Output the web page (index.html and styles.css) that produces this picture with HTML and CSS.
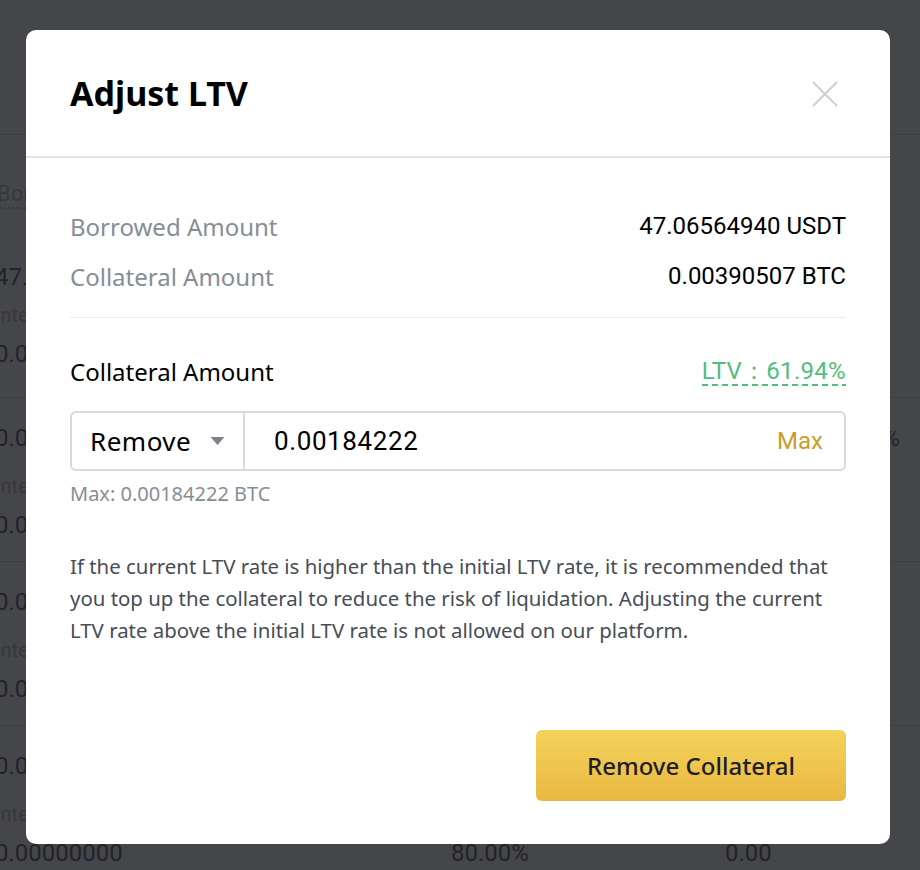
FILE: index.html
```html
<!DOCTYPE html>
<html lang="en">
<head>
  <meta charset="UTF-8" />
  <meta name="viewport" content="width=device-width, initial-scale=1" />
  <title>Adjust LTV</title>
  <link rel="stylesheet" href="styles.css">
</head>
<body>

  <!-- =================
       PÁGINA DE PRÉSTAMOS (DETRÁS DEL MODAL, YA OSCURECIDA)
       ================= -->
  <div class="page">
    <div class="page-top"></div>
    <div class="tabs"><span class="tab">Borrowed Orders</span></div>

    <div class="loan-row first">
      <div class="loan-line"><span>47.06564940</span><span>0.00390507</span><span>0.00</span><span></span></div>
      <div class="loan-line label"><span>Interest</span><span>Initial LTV</span><span>Margin Call</span><span></span></div>
      <div class="loan-line"><span>0.00000000</span><span>65.00%</span><span>0.00</span><span></span></div>
    </div>
    <div class="loan-row">
      <div class="loan-line"><span>0.00000000</span><span>0.00000000</span><span>0.00</span><span>0.00%</span></div>
      <div class="loan-line label"><span>Interest</span><span>Initial LTV</span><span>Margin Call</span><span></span></div>
      <div class="loan-line"><span>0.00000000</span><span>80.00%</span><span>0.00</span><span></span></div>
    </div>
    <div class="loan-row">
      <div class="loan-line"><span>0.00000000</span><span>0.00000000</span><span>0.00</span><span></span></div>
      <div class="loan-line label"><span>Interest</span><span>Initial LTV</span><span>Margin Call</span><span></span></div>
      <div class="loan-line"><span>0.00000000</span><span>80.00%</span><span>0.00</span><span></span></div>
    </div>
    <div class="loan-row">
      <div class="loan-line"><span>0.00000000</span><span>0.00000000</span><span>0.00</span><span></span></div>
      <div class="loan-line label"><span>Interest</span><span>Initial LTV</span><span>Margin Call</span><span></span></div>
      <div class="loan-line"><span>0.00000000</span><span>80.00%</span><span>0.00</span><span></span></div>
    </div>
  </div>

  <!-- =================
       MODAL AJUSTAR LTV
       ================= -->
  <div class="modal">
    <div class="modal-header">
      <h1>Adjust LTV</h1>
      <button class="close-btn" aria-label="Close">
        <svg viewBox="0 0 28 28"><path d="M2 2l24 24M26 2L2 26"/></svg>
      </button>
    </div>

    <div class="modal-body">
      <div class="info-row">
        <span class="info-label">Borrowed Amount</span>
        <span class="info-value">47.06564940 USDT</span>
      </div>
      <div class="info-row">
        <span class="info-label">Collateral Amount</span>
        <span class="info-value">0.00390507 BTC</span>
      </div>

      <div class="divider"></div>

      <div class="amount-head">
        <span>Collateral Amount</span>
        <span class="ltv">LTV：61.94%</span>
      </div>

      <!-- Selector + cantidad -->
      <div class="amount-box">
        <div class="amount-select">
          <span>Remove</span>
          <svg viewBox="0 0 14 8"><path d="M0 0h14L7 8z"/></svg>
        </div>
        <div class="amount-input">
          <span class="amount-value">0.00184222</span>
          <span class="max-link">Max</span>
        </div>
      </div>
      <div class="max-note">Max: 0.00184222 BTC</div>

      <p class="notice">If the current LTV rate is higher than the initial LTV rate, it is recommended that you top up the collateral to reduce the risk of liquidation. Adjusting the current LTV rate above the initial LTV rate is not allowed on our platform.</p>

      <div class="actions">
        <button class="submit-btn">Remove Collateral</button>
      </div>
    </div>
  </div>

</body>
</html>
```

FILE: styles.css
```css
/* Reset box-sizing */
* {
  box-sizing: border-box;
}

html, body {
  margin: 0;
  padding: 0;
  height: 100%;
}

/* El fondo ya se ve con la capa oscura del modal */
body {
  background: #45464a;
  font-family: 'Noto Sans', 'Liberation Sans', sans-serif;
  overflow: hidden;
  position: relative;
}

/* =================
   PÁGINA DE FONDO
   ================= */
.page {
  font-family: Roboto, 'Liberation Sans', sans-serif;
  color: #222327;
}

.page-top {
  height: 135px;
  border-bottom: 1px solid #3d3e42;
}

.tabs {
  height: 100px;
  padding-top: 46px;
}

.tab {
  display: inline-block;
  margin-left: -3px;
  font-size: 22px;
  line-height: 26px;
  color: #37383c;
  border-bottom: 2px dotted #37383c;
}

.loan-row {
  height: 164px;
  padding-top: 22px;
  border-bottom: 1px solid #3d3e42;
}

.loan-row.first {
  height: 163px;
  padding-top: 24px;
}

.loan-line {
  display: grid;
  grid-template-columns: 456px 274px 1fr auto;
  margin-left: -5px;
  padding-right: 20px;
  font-size: 24px;
  line-height: 36px;
}

.loan-line + .loan-line {
  margin-top: 7px;
}

.loan-line.label {
  margin-top: 16px;
  font-size: 20px;
  line-height: 28px;
  color: #37383c;
}

.loan-row.first .loan-line.label {
  margin-top: 6px;
}

/* =================
   MODAL
   ================= */
.modal {
  position: absolute;
  top: 30px;
  left: 26px;
  width: 864px;
  background: #ffffff;
  border-radius: 10px;
}

.modal-header {
  height: 128px;
  padding: 0 44px;
  display: flex;
  align-items: center;
  justify-content: space-between;
  border-bottom: 2px solid #e2e2e2;
}

.modal-header h1 {
  margin: 0;
  font-size: 34px;
  font-weight: 700;
  color: #000000;
}

.close-btn {
  width: 28px;
  height: 28px;
  margin: 2px 7px 0 0;
  padding: 0;
  border: none;
  background: none;
  cursor: pointer;
}

.close-btn svg {
  display: block;
  width: 28px;
  height: 28px;
  stroke: #d0d0d0;
  stroke-width: 2.2;
}

.modal-body {
  padding: 43px 44px 43px;
}

/* Filas de importes */
.info-row {
  display: flex;
  justify-content: space-between;
  align-items: center;
  height: 50px;
  font-size: 24px;
}

.info-label {
  color: #868d99;
}

.info-value {
  font-family: Roboto, 'Liberation Sans', sans-serif;
  color: #000000;
}

.divider {
  margin-top: 16px;
  height: 1px;
  background: #ececec;
}

.amount-head {
  margin-top: 35px;
  height: 36px;
  display: flex;
  justify-content: space-between;
  align-items: center;
  font-size: 24px;
  color: #000000;
}

/* Enlace LTV con subrayado discontinuo */
.ltv {
  font-family: Roboto, 'Liberation Sans', sans-serif;
  color: #4fbe80;
  line-height: 30px;
  letter-spacing: 0.3px;
  background: linear-gradient(to right, #4fbe80 65%, transparent 0) bottom left / 10px 2px repeat-x;
}

/* Caja de selector y cantidad */
.amount-box {
  margin-top: 22px;
  height: 60px;
  display: flex;
  border: 2px solid #dadada;
  border-radius: 6px;
}

.amount-select {
  width: 173px;
  padding-left: 18px;
  display: flex;
  align-items: center;
  gap: 19px;
  border-right: 2px solid #dadada;
  font-size: 26px;
  letter-spacing: 0.5px;
  color: #000000;
}

.amount-select svg {
  width: 15px;
  height: 8px;
  fill: #7d828b;
}

.amount-input {
  flex: 1;
  padding: 0 21px 0 29px;
  display: flex;
  align-items: center;
  justify-content: space-between;
  font-family: Roboto, 'Liberation Sans', sans-serif;
}

.amount-value {
  font-size: 26px;
  letter-spacing: 0.6px;
  color: #000000;
}

.max-link {
  font-size: 24px;
  color: #c99d2f;
}

.max-note {
  margin-top: 11px;
  font-size: 20px;
  line-height: 24px;
  color: #868d99;
}

.notice {
  margin: 44px 0 0;
  font-size: 20.4px;
  line-height: 32px;
  color: #474d57;
}

/* Botón principal */
.actions {
  margin-top: 84px;
  display: flex;
  justify-content: flex-end;
}

.submit-btn {
  width: 310px;
  height: 71px;
  border: none;
  border-radius: 6px;
  background: linear-gradient(180deg, #f3d35c, #eab841);
  font-family: 'Noto Sans', 'Liberation Sans', sans-serif;
  font-size: 24px;
  font-weight: 500;
  color: #1e2026;
  cursor: pointer;
}
```
